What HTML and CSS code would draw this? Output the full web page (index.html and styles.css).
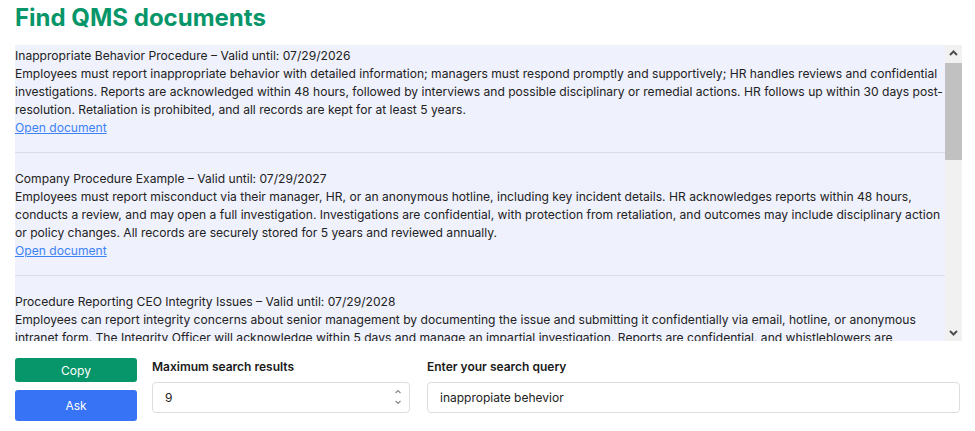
FILE: index.html
```html
<!DOCTYPE html>
<html lang="en">
<head>
<meta charset="utf-8">
<title>Find QMS documents</title>
<link rel="stylesheet" href="styles.css">
</head>
<body>
<div class="page">
  <h1 class="title">Find QMS documents</h1>
  <div class="results">
    <div class="results-list">
      <div class="item">
        <div class="item-title">Inappropriate Behavior Procedure – Valid until: 07/29/2026</div>
        <div class="item-body">Employees must report inappropriate behavior with detailed information; managers must respond promptly and supportively; HR handles reviews and confidential investigations. Reports are acknowledged within 48 hours, followed by interviews and possible disciplinary or remedial actions. HR follows up within 30 days post-resolution. Retaliation is prohibited, and all records are kept for at least 5 years.</div>
        <a class="item-link" href="#">Open document</a>
      </div>
      <div class="item">
        <div class="item-title">Company Procedure Example – Valid until: 07/29/2027</div>
        <div class="item-body">Employees must report misconduct via their manager, HR, or an anonymous hotline, including key incident details. HR acknowledges reports within 48 hours, conducts a review, and may open a full investigation. Investigations are confidential, with protection from retaliation, and outcomes may include disciplinary action or policy changes. All records are securely stored for 5 years and reviewed annually.</div>
        <a class="item-link" href="#">Open document</a>
      </div>
      <div class="item">
        <div class="item-title">Procedure Reporting CEO Integrity Issues – Valid until: 07/29/2028</div>
        <div class="item-body">Employees can report integrity concerns about senior management by documenting the issue and submitting it confidentially via email, hotline, or anonymous intranet form. The Integrity Officer will acknowledge within 5 days and manage an impartial investigation. Reports are confidential, and whistleblowers are protected from retaliation. Outcomes are reported to the Board, and all records are retained for at least 7 years.</div>
        <a class="item-link" href="#">Open document</a>
      </div>
    </div>
    <div class="scrollbar" aria-hidden="true">
      <div class="scroll-btn">
        <svg width="17" height="17" viewBox="0 0 17 17"><path d="M5 10 L8.5 6.5 L12 10" fill="none" stroke="#505050" stroke-width="2"/></svg>
      </div>
      <div class="scroll-track">
        <div class="scroll-thumb"></div>
      </div>
      <div class="scroll-btn">
        <svg width="17" height="17" viewBox="0 0 17 17"><path d="M5 7 L8.5 10.5 L12 7" fill="none" stroke="#505050" stroke-width="2"/></svg>
      </div>
    </div>
  </div>
  <div class="controls">
    <div class="buttons">
      <button class="btn btn-copy" type="button">Copy</button>
      <button class="btn btn-ask" type="button">Ask</button>
    </div>
    <div class="field">
      <label class="field-label" for="max">Maximum search results</label>
      <div class="number-wrap">
        <input class="field-input number-input" id="max" type="number" value="9">
        <svg class="spinner" width="10" height="20" viewBox="0 0 10 20" aria-hidden="true"><path d="M2.5 6 L5 3.5 L7.5 6" fill="none" stroke="#8a8a8a" stroke-width="1.2"/><path d="M2.5 14 L5 16.5 L7.5 14" fill="none" stroke="#8a8a8a" stroke-width="1.2"/></svg>
      </div>
    </div>
    <div class="field field-query">
      <label class="field-label" for="q">Enter your search query</label>
      <input class="field-input" id="q" type="text" value="inappropiate behevior">
    </div>
  </div>
</div>
</body>
</html>
```

FILE: styles.css
```css
html, body {
  margin: 0;
  padding: 0;
  background: #ffffff;
}

body {
  font-family: Inter, "Liberation Sans", sans-serif;
  color: #222222;
  font-size: 12px;
}

.page {
  padding: 0 13px 0 15px;
}

.title {
  margin: 2px 0 11px 0;
  font-size: 24px;
  line-height: 32px;
  font-weight: 700;
  color: #079669;
}

.results {
  display: flex;
  height: 296px;
}

.results-list {
  flex: 1;
  min-width: 0;
  overflow-y: auto;
  scrollbar-width: none;
  background: #eff1fd;
}

.results-list::-webkit-scrollbar {
  display: none;
}

.scrollbar {
  width: 17px;
  display: flex;
  flex-direction: column;
  background: #f1f1f1;
}

.scroll-btn {
  height: 17px;
  display: flex;
  align-items: center;
  justify-content: center;
}

.scroll-btn svg {
  display: block;
}

.scroll-track {
  flex: 1;
  padding-top: 1px;
}

.scroll-thumb {
  height: 97px;
  background: #c1c1c1;
}

.item {
  padding: 17px 0 15px 0;
  border-bottom: 1px solid #dcdde3;
  line-height: 18px;
  font-size: 12.1px;
}

.item:first-child {
  padding-top: 2px;
}

.item-link {
  color: #3b82f6;
  text-decoration: underline;
}

.controls {
  display: grid;
  grid-template-columns: 122px 258px 1fr;
  column-gap: 15px;
  margin-top: 17px;
  padding-right: 2px;
}

.buttons {
  display: flex;
  flex-direction: column;
  gap: 8px;
}

.btn {
  border: none;
  border-radius: 3px;
  color: #ffffff;
  font-family: Inter, "Liberation Sans", sans-serif;
  font-size: 12px;
  cursor: pointer;
}

.btn-copy {
  height: 24px;
  background: #079669;
}

.btn-ask {
  height: 31px;
  background: #3673f5;
}

.field {
  display: flex;
  flex-direction: column;
}

.field-query {
  margin-left: 2px;
}

.field-label {
  font-size: 12px;
  font-weight: 600;
  line-height: 16px;
  margin: 1px 0 7px 0;
  color: #1a1a1a;
}

.field-input {
  box-sizing: border-box;
  width: 100%;
  height: 31px;
  border: 1px solid #dddddd;
  border-radius: 4px;
  padding: 0 8px 0 12px;
  font-family: Inter, "Liberation Sans", sans-serif;
  font-size: 12px;
  color: #222222;
  background: #ffffff;
  outline: none;
}

.number-wrap {
  position: relative;
}

.number-input {
  -moz-appearance: textfield;
  appearance: textfield;
}

.number-input::-webkit-inner-spin-button,
.number-input::-webkit-outer-spin-button {
  -webkit-appearance: none;
  margin: 0;
}

.spinner {
  position: absolute;
  right: 7px;
  top: 5px;
  pointer-events: none;
}
```
